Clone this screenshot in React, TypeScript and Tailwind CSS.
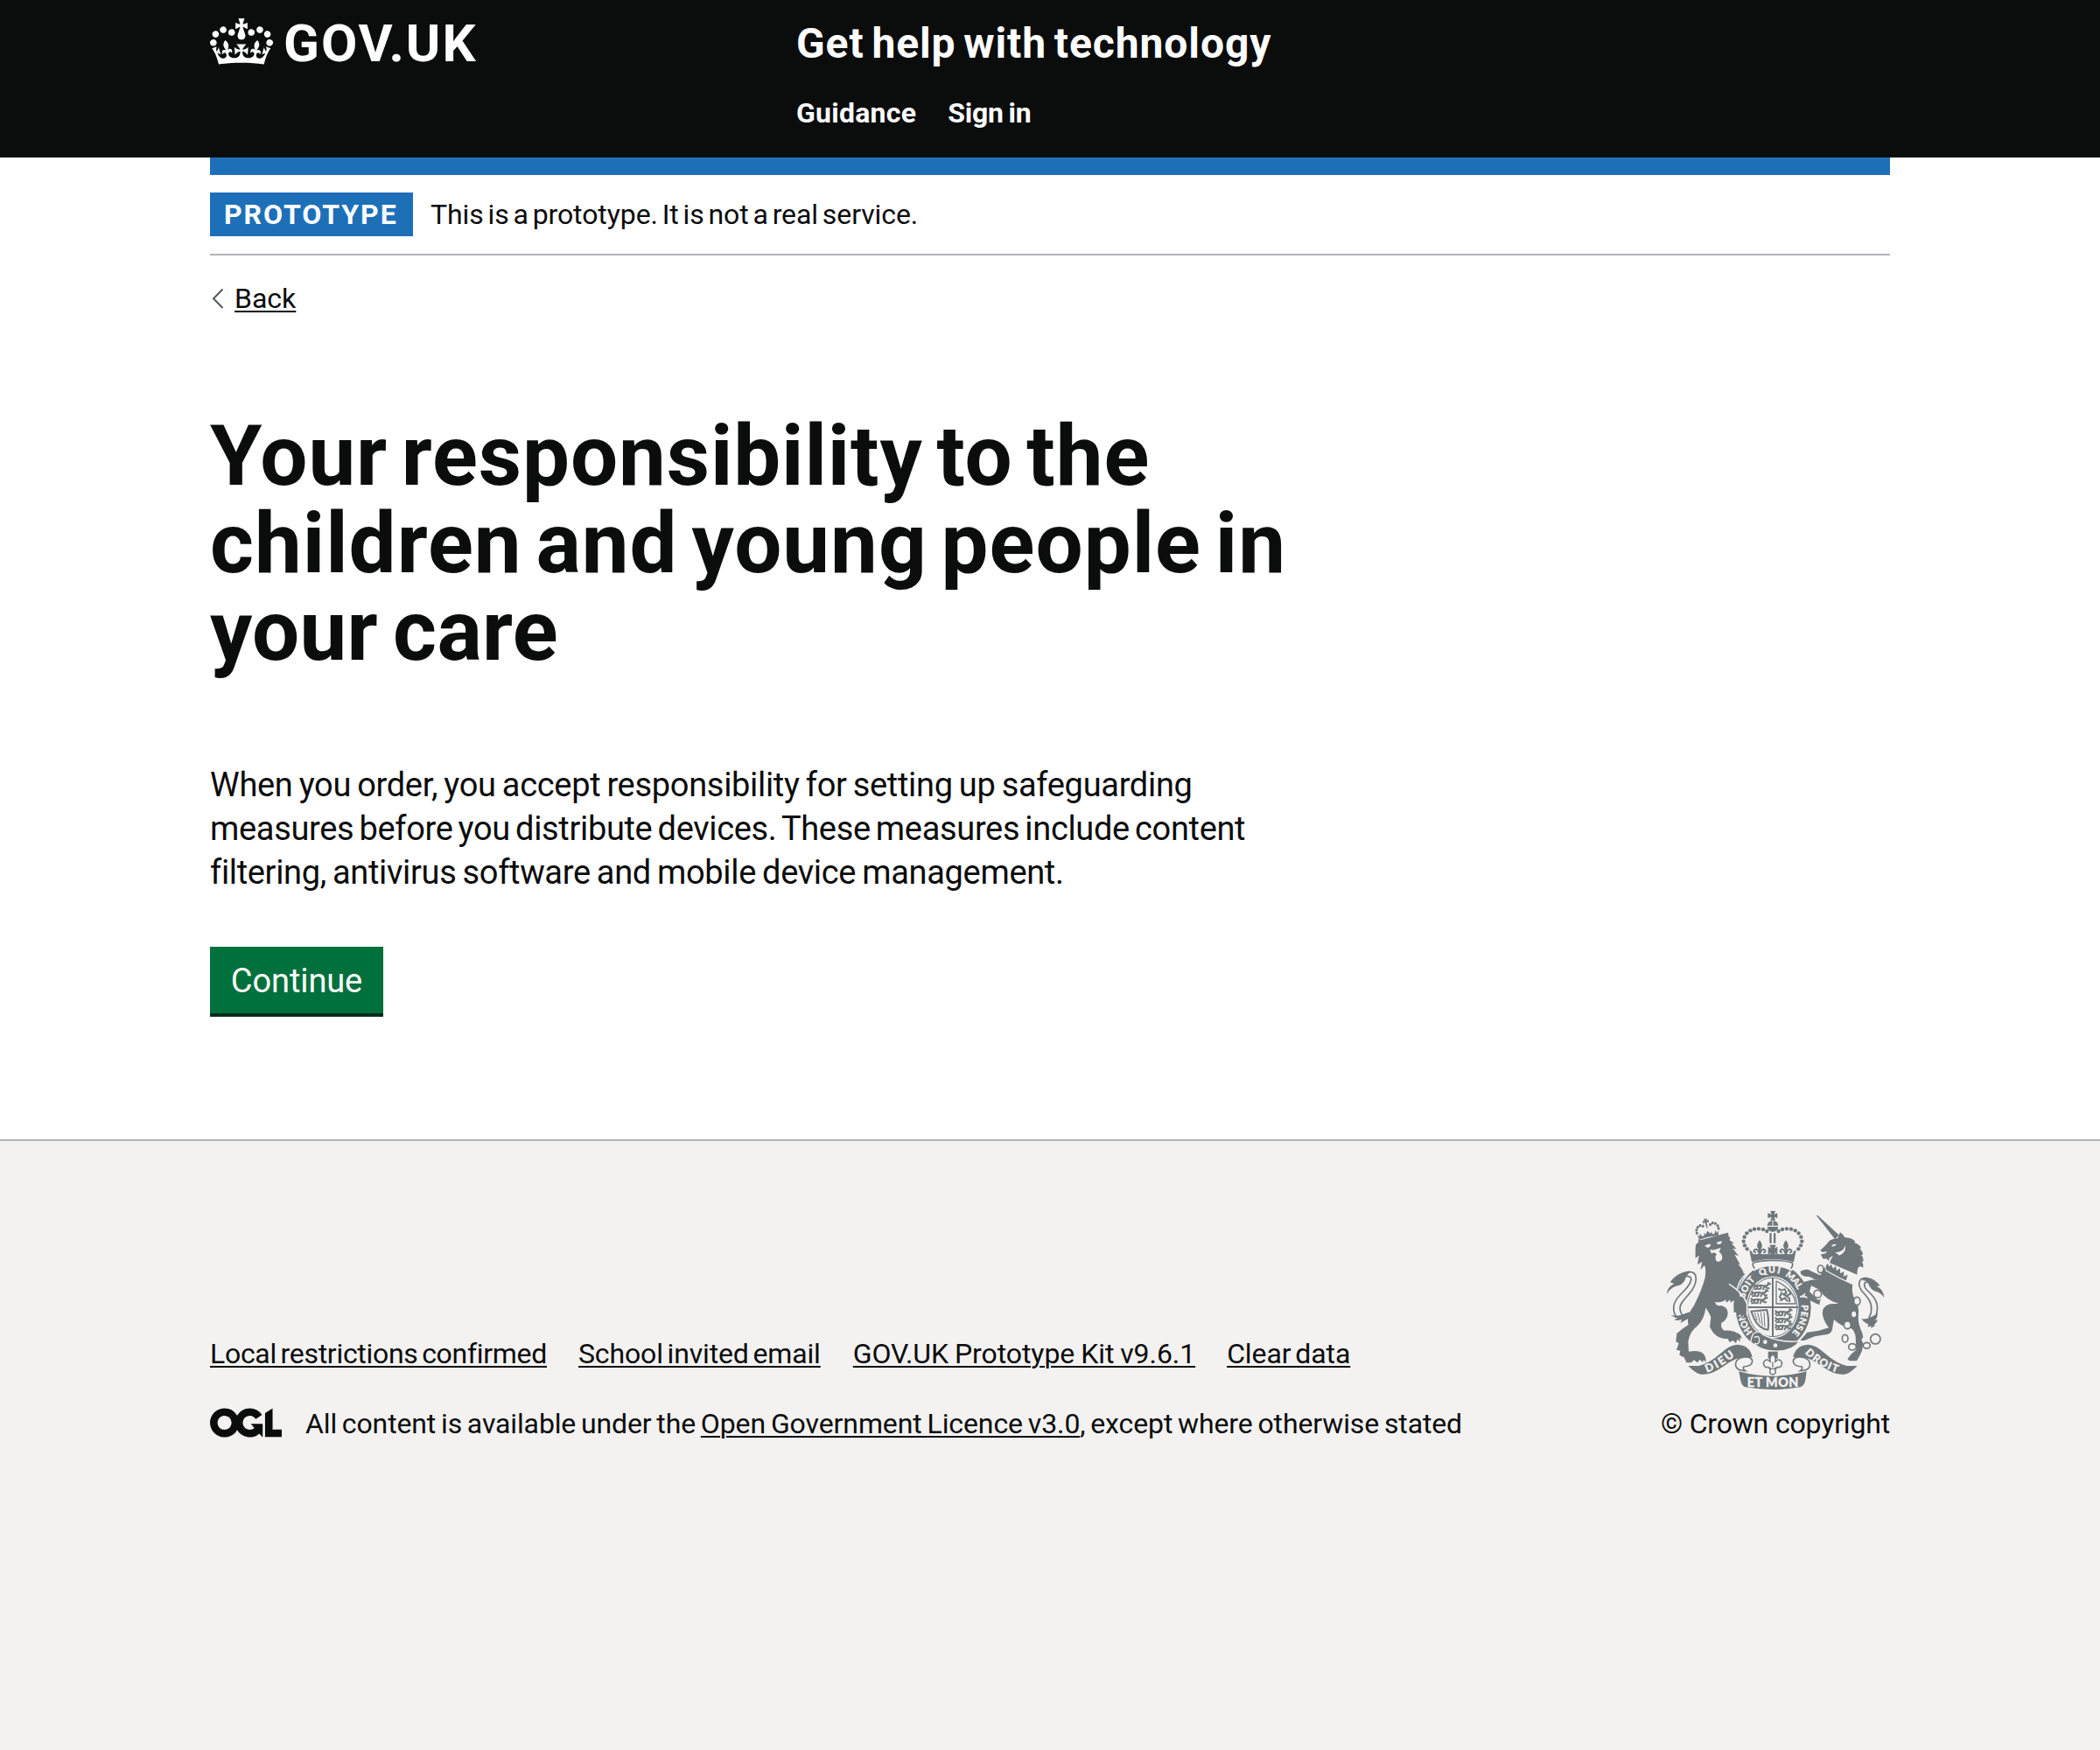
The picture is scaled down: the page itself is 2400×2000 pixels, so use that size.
import type { ReactNode } from 'react';

const INK = '#6f777b';
const PAPER = '#f3f2f1';

function Container({ children, className = '' }: { children: ReactNode; className?: string }) {
  return <div className={`mx-auto w-[1920px] ${className}`}>{children}</div>;
}

function CrownLogo() {
  return (
    <svg className="mt-[21px] h-[53px] w-[72px] shrink-0" viewBox="0 0 132 97" fill="white" aria-hidden="true">
      <path
        fillRule="evenodd"
        d="M25 30.2c3.5 1.5 7.7-.2 9.1-3.7 1.5-3.6-.2-7.8-3.9-9.2-3.6-1.4-7.6.3-9.1 3.9-1.4 3.5.3 7.5 3.9 9zM9 39.5c3.6 1.5 7.8-.2 9.2-3.7 1.5-3.6-.2-7.8-3.9-9.1-3.6-1.5-7.6.2-9.1 3.8-1.4 3.5.3 7.5 3.8 9zM4.4 57.2c3.5 1.5 7.7-.2 9.1-3.8 1.5-3.6-.2-7.7-3.9-9.1-3.5-1.5-7.6.3-9.1 3.8-1.4 3.5.3 7.6 3.9 9.1zm38.3-21.4c3.5 1.5 7.7-.2 9.1-3.8 1.5-3.6-.2-7.7-3.9-9.1-3.6-1.5-7.6.3-9.1 3.8-1.3 3.6.4 7.7 3.9 9.1zm64.4-5.6c-3.6 1.5-7.8-.2-9.1-3.7-1.5-3.6.2-7.8 3.8-9.2 3.6-1.4 7.7.3 9.2 3.9 1.3 3.5-.4 7.5-3.9 9zm15.9 9.3c-3.6 1.5-7.7-.2-9.1-3.7-1.5-3.6.2-7.8 3.7-9.1 3.6-1.5 7.7.2 9.2 3.8 1.5 3.5-.3 7.5-3.8 9zm4.7 17.7c-3.6 1.5-7.8-.2-9.2-3.8-1.5-3.6.2-7.7 3.9-9.1 3.6-1.5 7.7.3 9.2 3.8 1.3 3.5-.4 7.6-3.9 9.1zM89.3 35.8c-3.6 1.5-7.8-.2-9.2-3.8-1.4-3.6.2-7.7 3.9-9.1 3.6-1.5 7.7.3 9.2 3.8 1.4 3.6-.3 7.7-3.9 9.1zM69.7 17.7l8.9 4.7V9.3l-8.9 2.8c-.2-.3-.5-.6-.9-.9L72.4 0H59.6l3.5 11.2c-.3.3-.6.5-.9.9l-8.8-2.8v13.1l8.8-4.7c.3.3.6.7.9.9l-5 15.4v.1c-.2.8-.4 1.6-.4 2.4 0 4.1 3.1 7.5 7 8.1h.2c.3 0 .7.1 1 .1.4 0 .7 0 1-.1h.2c4-.6 7.1-4.1 7.1-8.1 0-.8-.1-1.7-.4-2.4V34l-5.1-15.4c.4-.2.7-.6 1-.9zM66 92.8c16.9 0 32.8 1.1 47.1 3.2 4-16.9 8.9-26.7 14-33.5l-9.6-3.4c1 4.9 1.1 7.2 0 10.2-1.5-1.4-3-4.3-4.2-8.7L108.6 76c2.8-2 5-3.2 7.5-3.3-4.4 9.4-10 11.9-13.6 11.2-4.3-.8-6.3-4.6-5.6-7.9 1-4.7 5.7-5.9 8-.5 4.3-8.7-3-11.4-7.6-8.8 7.1-7.2 7.9-13.5 2.1-21.1-8 6.1-8.1 12.3-4.5 20.8-4.7-5.4-12.1-2.5-9.5 6.2 3.4-5.2 7.9-2 7.2 3.1-.6 4.3-6.4 7.8-13.5 7.2-10.3-.9-10.9-8-11.2-13.8 2.5-.5 7.1 1.8 11 7.3L80.2 60c-4.1 4.4-8 5.3-12.3 5.4 1.4-4.4 8-11.6 8-11.6H55.5s6.4 7.2 7.9 11.6c-4.2-.1-8-1-12.3-5.4l1.4 16.4c3.9-5.5 8.5-7.7 10.9-7.3-.3 5.8-.9 12.8-11.1 13.8-7.2.6-12.9-2.9-13.5-7.2-.7-5 3.8-8.3 7.1-3.1 2.7-8.7-4.6-11.6-9.4-6.2 3.7-8.5 3.6-14.7-4.6-20.8-5.8 7.6-5 13.9 2.2 21.1-4.7-2.6-11.9.1-7.7 8.8 2.3-5.5 7.1-4.2 8.1.5.7 3.3-1.3 7.1-5.7 7.9-3.5.7-9-1.8-13.5-11.2 2.5.1 4.7 1.3 7.5 3.3l-4.7-15.4c-1.2 4.4-2.7 7.2-4.3 8.7-1.1-3-.9-5.3 0-10.2l-9.5 3.4c5 6.9 9.9 16.7 14 33.5 14.8-2.1 30.8-3.2 47.7-3.2z"
      />
    </svg>
  );
}

function LicenceLogo() {
  return (
    <svg className="mt-0.5 h-[34px] w-[82px] shrink-0" viewBox="0 0 483.2 195.7" fill="#0b0c0c" role="img" aria-label="Open Government Licence">
      <path d="M421.5 142.8V.1l-50.7 32.3v161.1h112.4v-50.7zm-122.3-9.6A47.12 47.12 0 0 1 221 97.8c0-26 21.1-47.1 47.1-47.1 16.7 0 31.4 8.7 39.7 21.8l42.7-27.2A97.63 97.63 0 0 0 268.1 0c-36.5 0-68.3 20.1-85.1 49.7A98 98 0 0 0 97.8 0C43.9 0 0 43.9 0 97.8s43.9 97.8 97.8 97.8c36.5 0 68.3-20.1 85.1-49.7a97.76 97.76 0 0 0 149.6 25.4l19.4 22.2h3v-87.8h-80l24.3 27.5zM97.8 145c-26 0-47.1-21.1-47.1-47.1s21.1-47.1 47.1-47.1 47.1 21.1 47.1 47.1S123.8 145 97.8 145" />
    </svg>
  );
}

/* One passant lion of the shield quarters, drawn as a small stroke figure. */
function SmallLion({ x, y }: { x: number; y: number }) {
  return (
    <g transform={`translate(${x} ${y})`} fill="none" stroke={INK} strokeWidth="6" strokeLinecap="round" strokeLinejoin="round">
      <path d="M2 3l6 4 -6 5M9 7q14-4 30 0l8 8 6 0M14 8l-2 9 -7 1M26 8l-2 9 -6 1M38 9l-5 9M42 6q10 0 8-6t7 0" />
    </g>
  );
}

const ARCH_BEADS: [number, number][] = [
  [418, 141], [405, 135], [390, 133], [375, 134], [361, 139], [349, 148], [341, 161], [338, 176], [342, 190], [350, 202],
];

/* Left half of the imperial crown; drawn twice, once mirrored. */
function CrownHalf() {
  return (
    <g>
      {ARCH_BEADS.map(([x, y]) => (
        <circle key={`${x}-${y}`} cx={x} cy={y} r="6.6" />
      ))}
      <path d="M358 206l8 41q34-10 73-10v-17h-68q-4-4-5-10z" />
      <path d="M393 172q14 18 5 30l-1 20h-8l-1-20q-9-12 5-30z" />
      <path d="M439 188h-12l5 12-10-6v28l10-7-2 9h9z" />
      <path fill="none" stroke={INK} strokeWidth="6" strokeLinecap="round" d="M390 213q-8-16-16-6q-2 6 4 7M396 213q8-16 16-6q2 6-4 7" />
      <path fill="none" stroke={INK} strokeWidth="5" d="M439 241q-41 0-67 8q-6 8 4 20" />
    </g>
  );
}

function Lion() {
  return (
    <g>
      <g transform="rotate(-12 214 135)">
        <path d="M180 164l-5-18 8 8 2-11 7 12 8-2-1-9 6 7 8-11 8 11 6-7-1 9 8 2 7-12 2 11 8-8-5 18q-33-6-66 0z" />
        {[[176, 140], [177, 130], [183, 121], [192, 117], [201, 121], [227, 121], [236, 117], [245, 121], [251, 130], [252, 140]].map(([x, y]) => (
          <circle key={`${x}-${y}`} cx={x} cy={y} r="4.8" />
        ))}
        <path d="M208 98h12l-3 7 7-3v11l-7-3-1 20h-4l-1-20-7 3v-11l7 3z" />
      </g>
      <path d="M174 188L184 178L181 168L189 172Q234 160 261 152L285 146L287 160L293 164L289 172L306 182L297 183L314 203L301 200L321 226L307 221L327 257L317 252Q335 270 338 286L346 288L331 314Q319 334 323 354L327 374L345 388Q351 408 350 426L348 432L344 424L343 438L337 428L332 440L328 426L315 435L317 419L305 420Q303 396 305 378L293 386L292 376L279 386L276 376Q264 388 240 384Q244 400 260 396Q282 400 284 420Q284 444 262 456Q258 474 272 482Q300 480 314 490Q330 494 332 510L325 506L326 520L316 512L312 526L302 516L290 522L284 510Q240 512 222 468L226 436Q216 412 208 404Q204 440 180 466Q152 488 148 520L150 554Q186 548 200 562Q210 572 209 590L201 582L198 591L188 581L180 592L168 583L158 592L142 592L134 574L118 566L121 551L108 548L116 526L106 520L109 492Q126 476 149 462Q142 440 156 414L168 396Q196 340 206 300Q210 270 204 258L190 274L196 246L180 256L185 224L173 234Q172 204 174 188z" />
      <path fill={PAPER} d="M204 192q12-8 22-6q-2 10-10 12zM244 182q10-8 20-6q-2 10-12 10zM222 204q14 4 26-2l12-4-6 14q14 10 10 26q-10 14-20 4q-6-12 2-22l-10-6-8 4z" />
      <path fill="none" stroke={PAPER} strokeWidth="5" d="M288 322q48 30 62 68v40M346 288q-24 22-30 52" />
      <path d="M74 358q4-28 26-36l-14-6q18-26 46-34q20-6 26-3q-10 6-18 22q-8 26-32 28q-22 6-34 29zM88 428q16 6 36 0l30-10-4 22q-16 8-28 16l4-12q-18 6-26 0l12-4q-16-4-24-12z" />
      <path fill="none" stroke={INK} strokeWidth="5" strokeLinecap="round" d="M150 281C180 278 182 312 160 345C140 372 120 385 120 405C120 418 124 425 132 432M146 296C166 296 158 318 146 332C125 358 98 375 98 404C98 418 102 428 108 434" />
    </g>
  );
}

function Unicorn() {
  return (
    <g>
      <path d="M587 87l5 0 74 68-15 13z" />
      <path d="M601 207q20-18 32-34q14-8 28-8l8-20q12 8 16 18q22 0 36 13l-4 4q22 8 24 20l-6 0q12 10 12 22l-6 0q10 12 7 24l-5-2q8 16 4 22l-8-4q-12 0-12 28l-94-40q4-14 12-24l-12 6-3 10-9-7-9 2-10-16 18-4 4-6-16 2z" />
      <path fill={PAPER} d="M640 190q8-6 16-4q-4 8-14 8zM652 214q30 0 34-24q6 24-20 34z" />
      <path d="M620 276q48 26 92 46q-6 36 12 60q10 16 8 40q-4 34 12 66l4 16-6 10 6 12-4 26-10 20-8 14-24 0-8-6 14-18 16-14-2-44q-4-30-24-32q-28-6-50-28q-4 18-6 34q-2 12-14 16l-46 8-36 14-14 0 24-28 40-6 34-10q-30-40-18-66q12-18 42-16l10-2q-40-6-66-46l-28-14-6 20 30 30 8-6-4 22-14-6-22-12-22-34 4-26 26-8 28-2q8-28 18-42z" />
      <path d="M612 320L596 306Q584 310 574 302L560 296Q550 300 536 290L532 280Q552 266 570 278L600 292L618 286z" />
      <path d="M626 252l6 11 6-9 7 15 9-9 3 17 11-9 2 18 12-6-1 16 14-6-6 22-66-34q-8-14 3-26z" />
      <path fill="none" stroke={PAPER} strokeWidth="4" d="M620 276q44 26 92 47" />
      <g fill={PAPER} stroke={INK} strokeWidth="5">
        <ellipse cx="602" cy="271" rx="10" ry="13" />
        <ellipse cx="592" cy="356" rx="13" ry="13" />
        <ellipse cx="727" cy="381" rx="11" ry="14" />
        <ellipse cx="716" cy="426" rx="10" ry="12" />
        <ellipse cx="694" cy="463" rx="12" ry="13" />
        <ellipse cx="686" cy="509" rx="10" ry="13" />
        <ellipse cx="711" cy="538" rx="13" ry="11" />
        <ellipse cx="760" cy="533" rx="12" ry="10" />
        <circle cx="790" cy="511" r="17" />
      </g>
      <path d="M820 370q-2-30-26-40l12-2q-16-20-34-26q-22-4-28 8q14-2 20 8q10 26 28 30q18 4 28 22zM742 442q20 2 40-10q14-6 14-16q4 20-8 32l10-4q-4 14-14 18l6 2-16 10 2-8-12 4 2-10q-14-4-24-18z" />
      <path fill="none" stroke={INK} strokeWidth="5" strokeLinecap="round" d="M760 302C730 300 728 325 745 348C765 370 778 385 776 410Q775 428 768 436M764 316C750 312 748 330 760 342C785 365 800 385 796 412Q794 430 788 440" />
    </g>
  );
}

/* Folded end of the motto ribbon; drawn twice, once mirrored. */
function RibbonEnd() {
  return (
    <g>
      <path d="M148 603l36 0q36-8 74-42t64-30q38 4 46 42l-28 0q-28 0-72 32q-48 34-82 26q-16-6-38-28z" />
      <path fill={PAPER} stroke={INK} strokeWidth="5" d="M345 572q24 2 23 16q-2 16-30 18q-4 8 6 14q-28 0-33-16q-4-28 34-32z" />
    </g>
  );
}

const QUARTER_LIONS: [number, number][] = [
  [372, 322], [364, 346], [362, 370], [446, 412], [446, 436], [446, 460],
];

function RoyalArms() {
  const mottoClass = "font-['Lato'] font-black";
  return (
    <svg className="h-[204px] w-[250px]" viewBox="72 72 750 612" fill={INK} role="img" aria-label="Royal coat of arms">
      <defs>
        <path id="garter" pathLength="100" d="M438 520A99 118 0 0 1 438 284A99 118 0 0 1 438 520" />
        <path id="dieu" d="M212 626q44-14 102-62" />
        <path id="droit" d="M548 559q52 52 122 70" />
      </defs>
      <ellipse cx="440" cy="402" rx="129" ry="149" />
      <ellipse cx="437" cy="402" rx="90" ry="106" fill={PAPER} />
      <ellipse cx="437" cy="402" rx="85" ry="101" fill="none" stroke={INK} strokeWidth="3" />
      <path stroke={INK} strokeWidth="6" d="M438 300V502M350 402H526" />
      {QUARTER_LIONS.map(([x, y]) => (
        <SmallLion key={`${x}-${y}`} x={x} y={y} />
      ))}
      <g fill="none" stroke={INK} strokeWidth="4" strokeLinejoin="round">
        <path d="M450 312l0 78 66 0q-4-46-66-78" strokeWidth="4" />
        <path d="M457 338l10 6 12-4 6 12-12 6 14 4 14-8M470 350l-8 16 8 12M480 362l14 8 2 14M463 380l16-10 10 12M490 342q12 6 8 18" strokeWidth="6" />
        <path d="M364 416l54-5q8 34 4 68q-30-2-48-38z" strokeWidth="6" />
        <path d="M376 421l8 26M386 420l9 38M397 419l6 46M408 418l3 52" strokeWidth="3" />
      </g>
      <g fill={PAPER} stroke={PAPER} strokeWidth="1" fontSize="31" className={mottoClass}>
        <text><textPath href="#garter" startOffset="11.5%" textLength="72">HON</textPath></text>
        <text><textPath href="#garter" startOffset="29.5%" textLength="74">SOIT</textPath></text>
        <text><textPath href="#garter" startOffset="43.5%" textLength="68">QUI</textPath></text>
        <text><textPath href="#garter" startOffset="56.3%" textLength="66">MAL</textPath></text>
        <text><textPath href="#garter" startOffset="68.2%">Y</textPath></text>
        <text><textPath href="#garter" startOffset="73.8%" textLength="104">PENSE</textPath></text>
      </g>
      <path stroke={PAPER} strokeWidth="4" d="M370 494q20-16 34 2q60 30 126 22q-26 38-90 34q-40-2-62-22q-20-4-14-18q2-8 6-18z" />
      <circle cx="412" cy="521" r="7" fill={PAPER} />
      <circle cx="447" cy="533" r="7" fill={PAPER} />
      <path fill="none" stroke={PAPER} strokeWidth="4" d="M374 506q18-10 18 8t-16 12" />

      <path fill={PAPER} stroke={PAPER} strokeWidth="6" d="M366 248q72-20 144 0q6 14-8 26q-64-32-128 0q-14-12-8-26z" />
      <CrownHalf />
      <g transform="matrix(-1 0 0 1 876 0)">
        <CrownHalf />
      </g>
      <path d="M430 72h17l-4 12 11-5v18l-11-5 4 12h-17l4-12-13 5v-18l13 5z" />
      <path d="M419 122q2-16 19-17q17 1 19 17zM419 126h38q-2 16-19 18q-17-2-19-18z" />
      <path d="M427 148h7v34h-7zM441 148h7v34h-7z" />
      <path stroke={PAPER} strokeWidth="3" d="M438 104v18" />

      <Lion />
      <Unicorn />

      <RibbonEnd />
      <g transform="matrix(-1 0 0 1 876 0)">
        <RibbonEnd />
      </g>
      <path d="M322 622q116 32 232 0l-4 30q-4 20-18 24q-94 16-188 0q-12-4-16-22z" />
      <path d="M422 554h33v24h-33z" />
      <path fill={PAPER} stroke={INK} strokeWidth="4.5" strokeLinejoin="round" d="M438 562q14 12 8 28q6-10 16-7q12 6 5 20q-6 8-13 4l-8 4 1 10q4 8-9 12q-13-4-9-12l1-10-8-4q-7 4-13-4q-7-14 5-20q10-3 16 7q-6-16 8-28z" />
      <path stroke={INK} strokeWidth="4" d="M424 613h28M438 590v18" />
      <g fill={PAPER} stroke={PAPER} strokeWidth="1" className={mottoClass}>
        <text fontSize="38"><textPath href="#dieu" textLength="112">DIEU</textPath></text>
        <text fontSize="36"><textPath href="#droit" textLength="130">DROIT</textPath></text>
        <text x="438" y="674" fontSize="43" textAnchor="middle" textLength="176">ET MON</text>
      </g>
    </svg>
  );
}

const linkClass = 'underline decoration-2 underline-offset-[3px]';

export default function App() {
  return (
    <div className="flex min-h-[2000px] flex-col bg-white font-['Roboto',sans-serif] text-[32px] leading-10 text-[#0b0c0c]">
      <header className="h-[180px] bg-[#0b0c0c] text-white">
        <Container className="flex">
          <a className="flex w-[671px] shrink-0">
            <CrownLogo />
            <span className="ml-[12px] mt-[20px] text-[60px] font-bold leading-[60px] tracking-[2px]">GOV.UK</span>
          </a>
          <div className="pt-5">
            <div className="-ml-px text-[48px] font-bold leading-[60px] tracking-[0.9px] [word-spacing:-4px]">Get help with technology</div>
            <nav className="-ml-px mt-[29px] flex gap-[36px] font-bold">
              <a className="tracking-[0.25px]">Guidance</a>
              <a className="tracking-[-0.2px] [word-spacing:-2px]">Sign in</a>
            </nav>
          </div>
        </Container>
      </header>

      <Container>
        <div className="h-5 bg-[#1d70b8]" />
        <div className="flex items-center border-b-2 border-[#b1b4b6] py-5 leading-[50px]">
          <strong className="w-[232px] bg-[#1d70b8] pl-4 font-bold tracking-[1.95px] text-white">PROTOTYPE</strong>
          <span className="ml-5 tracking-[-0.09px] [word-spacing:-3px]">This is a prototype. It is not a real service.</span>
        </div>
        <a className="mt-[29px] flex items-center">
          <svg className="h-[24px] w-[28px]" viewBox="0 0 28 24" fill="none" stroke="#505a5f" strokeWidth="2" aria-hidden="true">
            <path d="M14.5 1.5L4 12.2L14.5 23" />
          </svg>
          <span className={linkClass}>Back</span>
        </a>
      </Container>

      <Container className="pt-[110px]">
        <main>
          <h1 className="text-[96px] font-bold leading-[100px]">
            <span className="block tracking-[0.9px] [word-spacing:-9px]">Your responsibility to the</span>
            <span className="block tracking-[1px] [word-spacing:-9px]">children and young people in</span>
            <span className="block tracking-[0.3px] [word-spacing:-7px]">your care</span>
          </h1>
          <p className="mt-[101px] text-[38px] leading-[50px]">
            <span className="block tracking-[-0.31px] [word-spacing:-2px]">When you order, you accept responsibility for setting up safeguarding</span>
            <span className="block tracking-[-0.33px] [word-spacing:-3px]">measures before you distribute devices. These measures include content</span>
            <span className="block tracking-[-0.33px] [word-spacing:-2px]">filtering, antivirus software and mobile device management.</span>
          </p>
          <button className="mt-[60px] block h-[76px] w-[198px] bg-[#00703c] pt-0.5 text-[38px] leading-[50px] tracking-[-0.1px] text-white shadow-[0_4px_0_#002d18]">
            Continue
          </button>
        </main>
      </Container>

      <footer className="mt-[144px] grow border-t-2 border-[#b1b4b6] bg-[#f3f2f1]">
        <Container className="flex items-end justify-between pt-20">
          <div>
            <nav className="flex">
              <a className={`${linkClass} w-[384px] whitespace-nowrap tracking-[-0.3px] [word-spacing:-3px]`}>Local restrictions confirmed</a>
              <a className={`${linkClass} ml-[37px] whitespace-nowrap tracking-[-0.15px] [word-spacing:-3px]`}>School invited email</a>
              <a className={`${linkClass} ml-[37px] tracking-[-0.06px] [word-spacing:-1px]`}>GOV.UK Prototype Kit v9.6.1</a>
              <a className={`${linkClass} ml-9 tracking-[-0.1px] [word-spacing:-3px]`}>Clear data</a>
            </nav>
            <div className="mt-10 flex items-start">
              <LicenceLogo />
              <p className="ml-[27px] whitespace-pre">
                <span className="tracking-[-0.13px] [word-spacing:-2px]">All content is available under the </span>
                <a className={`${linkClass} tracking-[-0.1px] [word-spacing:-2px]`}>Open Government Licence v3.0</a>
                <span className="tracking-[-0.12px] [word-spacing:-2px]">, except where otherwise stated</span>
              </p>
            </div>
          </div>
          <div className="flex flex-col items-end">
            <div className="mr-1.5">
              <RoyalArms />
            </div>
            <a className="mt-[19px] tracking-[-0.17px]">© Crown copyright</a>
          </div>
        </Container>
      </footer>
    </div>
  );
}
